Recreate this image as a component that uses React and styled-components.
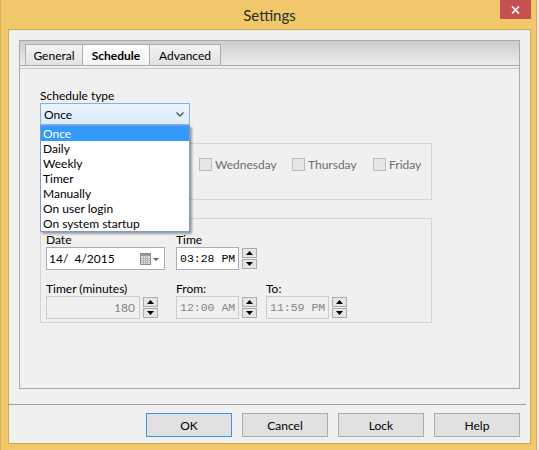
import React from 'react';
import styled, { createGlobalStyle } from 'styled-components';

const GlobalStyle = createGlobalStyle`
  html, body {
    margin: 0;
    padding: 0;
    background: #e9e9e9;
  }
  body {
    font-family: Lato, "Noto Sans", sans-serif;
    font-size: 12px;
    color: #000;
  }
  * {
    box-sizing: border-box;
  }
`;

const Window = styled.div`
  width: 537px;
  height: 450px;
  display: flex;
  flex-direction: column;
  background: #f0c869;
  border-left: 1px solid #d9b257;
  border-right: 1px solid #d9b257;
  padding: 0 5px 6px 7px;
`;

const TitleBar = styled.div`
  height: 29px;
  display: grid;
  grid-template-columns: 1fr auto 1fr;
  align-items: start;
`;

const Title = styled.div`
  grid-column: 2;
  font-size: 15px;
  line-height: 30px;
  color: #2b2b2b;
`;

const CloseButton = styled.div`
  grid-column: 3;
  justify-self: end;
  width: 31px;
  height: 19px;
  background: #c75050;
  display: flex;
  align-items: center;
  justify-content: center;
`;

const Client = styled.div`
  flex: 1;
  display: flex;
  flex-direction: column;
  background: #f0f0f0;
  border: 1px solid #cfa94f;
  padding: 10px 10px 0 10px;
`;

const TabControl = styled.div`
  height: 349px;
  display: flex;
  flex-direction: column;
  border: 1px solid #a9a9a9;
`;

const TabStrip = styled.div`
  height: 25px;
  display: flex;
  align-items: flex-end;
  padding-left: 5px;
  background: linear-gradient(#cdcdcd, #ececec);
  border-bottom: 1px solid #a9a9a9;
`;

const Tab = styled.div`
  width: ${p => p.$w}px;
  height: 21px;
  display: flex;
  align-items: center;
  justify-content: center;
  border: 1px solid #acacac;
  border-bottom: none;
  margin-right: -1px;
  background: ${p => (p.$active ? 'linear-gradient(#ffffff, #f4f4f4)' : 'linear-gradient(#f2f2f2, #e3e3e3)')};
  font-weight: ${p => (p.$active ? 700 : 400)};
  position: relative;
  z-index: ${p => (p.$active ? 1 : 0)};
`;

const Pane = styled.div`
  flex: 1;
  margin-top: 2px;
  border-top: 1px solid #c9c9c9;
  padding: 19px 0 0 20px;
`;

const FieldLabel = styled.div`
  line-height: ${p => p.$lh || 15}px;
  height: ${p => p.$lh || 15}px;
  white-space: nowrap;
`;

const ComboWrap = styled.div`
  position: relative;
  width: 150px;
  z-index: 5;
`;

const Combo = styled.div`
  height: 22px;
  display: flex;
  align-items: center;
  justify-content: space-between;
  padding: 0 5px 0 3px;
  border: 1px solid #7eb4ea;
  background: linear-gradient(#ecf4fc, #dcecfc);
`;

const DropList = styled.ul`
  position: absolute;
  top: 100%;
  left: 0;
  width: 150px;
  margin: 0;
  padding: 0;
  list-style: none;
  background: #fff;
  border: 1px solid #7a9cc8;
  box-shadow: 2px 2px 2px rgba(0, 0, 0, 0.35);
`;

const Option = styled.li`
  height: 15px;
  line-height: 15px;
  padding-left: 2px;
  white-space: nowrap;
  background: ${p => (p.$selected ? '#3399ff' : 'transparent')};
  color: ${p => (p.$selected ? '#fff' : '#000')};
`;

const GroupBox = styled.div`
  width: 392px;
  margin-top: 18px;
  border: 1px solid #d5d5d5;
`;

const DaysGrid = styled.div`
  display: grid;
  grid-template-columns: 76px 78px 93px 81px auto;
  grid-template-rows: 15px 15px;
  row-gap: 8px;
  padding: 13px 0 4px 4px;
`;

const CheckItem = styled.label`
  grid-column: ${p => p.$col};
  display: flex;
  align-items: center;
  gap: 3px;
  height: 15px;
  color: #6d6d6d;
  white-space: nowrap;
`;

const CheckBox = styled.span`
  width: 13px;
  height: 13px;
  border: 1px solid #bcbcbc;
  background: #e6e6e6;
`;

const FieldsGrid = styled.div`
  display: grid;
  grid-template-columns: 130px 90px auto;
  row-gap: 12px;
  padding: 14px 0 3px 5px;
`;

const ControlRow = styled.div`
  display: flex;
  align-items: flex-start;
  gap: 3px;
  height: 23px;
`;

const TextBox = styled.div`
  width: ${p => p.$w}px;
  height: 23px;
  display: flex;
  align-items: center;
  justify-content: ${p => (p.$right ? 'flex-end' : 'flex-start')};
  padding: 0 4px 0 3px;
  border: 1px solid ${p => (p.$disabled ? '#cccccc' : '#abadb3')};
  background: ${p => (p.$disabled ? '#f0f0f0' : '#fff')};
  color: ${p => (p.$disabled ? '#858585' : '#000')};
  font-family: ${p => (p.$mono ? '"Liberation Mono", "DejaVu Sans Mono", monospace' : 'inherit')};
  font-size: ${p => (p.$mono ? '11.5px' : '12px')};
  white-space: pre;
`;

const DateBox = styled(TextBox)`
  padding: 0 4px 0 2px;
  justify-content: space-between;
`;

const Spin = styled.div`
  display: flex;
  flex-direction: column;
  gap: 1px;
  padding-top: 1px;
`;

const SpinButton = styled.div`
  width: 15px;
  height: 10px;
  display: flex;
  align-items: center;
  justify-content: center;
  border: 1px solid #acacac;
  background: #e5e5e5;
`;

const Separator = styled.div`
  height: 1px;
  margin: 15px -6px 0 -10px;
  background: #a0a0a0;
`;

const ButtonRow = styled.div`
  display: flex;
  justify-content: flex-end;
  gap: 10px;
  margin-top: 8px;
`;

const Button = styled.div`
  width: 86px;
  height: 24px;
  display: flex;
  align-items: center;
  justify-content: center;
  background: #e1e1e1;
  border: 1px solid ${p => (p.$default ? '#3c93e4' : '#adadad')};
`;

function Triangle({ up }) {
  return (
    <svg width='7' height='4' viewBox='0 0 7 4'>
      <path d={up ? 'M0 4 L3.5 0 L7 4 Z' : 'M0 0 L3.5 4 L7 0 Z'} fill='#000' />
    </svg>
  );
}

function Spinner() {
  return (
    <Spin>
      <SpinButton><Triangle up /></SpinButton>
      <SpinButton><Triangle /></SpinButton>
    </Spin>
  );
}

function CalendarIcon() {
  return (
    <svg width='20' height='12' viewBox='0 0 20 12'>
      <rect x='0.5' y='0.5' width='10' height='11' fill='#e8e8e8' stroke='#8c8c8c' />
      <rect x='1' y='1' width='9' height='2' fill='#9a9a9a' />
      <path d='M1 5.5 H10 M1 7.5 H10 M1 9.5 H10 M3.5 3 V11 M5.5 3 V11 M7.5 3 V11' stroke='#b4b4b4' strokeWidth='1' />
      <path d='M13 5 L19 5 L16 8 Z' fill='#4d6185' />
    </svg>
  );
}

const options = ['Once', 'Daily', 'Weekly', 'Timer', 'Manually', 'On user login', 'On system startup'];
// the first two columns sit under the open list and are not seen
const days = [['Wednesday', 3], ['Thursday', 4], ['Friday', 5]];

export default function App() {
  return (
    <>
      <GlobalStyle />
      <Window>
        <TitleBar>
          <Title>Settings</Title>
          <CloseButton>
            <svg width='9' height='8' viewBox='0 0 9 8'>
              <path d='M1 0.5 L8 7.5 M8 0.5 L1 7.5' stroke='#fff' strokeWidth='1.7' />
            </svg>
          </CloseButton>
        </TitleBar>
        <Client>
          <TabControl>
            <TabStrip>
              <Tab $w={58}>General</Tab>
              <Tab $w={68} $active>Schedule</Tab>
              <Tab $w={72}>Advanced</Tab>
            </TabStrip>
            <Pane>
              <FieldLabel>Schedule type</FieldLabel>
              <ComboWrap>
                <Combo>
                  <span>Once</span>
                  <svg width='8' height='5' viewBox='0 0 8 5'>
                    <path d='M0.5 0.5 L4 4 L7.5 0.5' fill='none' stroke='#555' strokeWidth='1.4' />
                  </svg>
                </Combo>
                <DropList>
                  {options.map((o, i) => (
                    <Option key={o} $selected={i === 0}>{o}</Option>
                  ))}
                </DropList>
              </ComboWrap>
              <GroupBox>
                <DaysGrid>
                  {days.map(([d, col]) => (
                    <CheckItem key={d} $col={col}>
                      <CheckBox />
                      {d}
                    </CheckItem>
                  ))}
                </DaysGrid>
              </GroupBox>
              <GroupBox>
                <FieldsGrid>
                  <div>
                    <FieldLabel $lh={14}>Date</FieldLabel>
                    <ControlRow>
                      <DateBox $w={119}>
                        <span>14/  4/2015</span>
                        <CalendarIcon />
                      </DateBox>
                    </ControlRow>
                  </div>
                  <div>
                    <FieldLabel $lh={14}>Time</FieldLabel>
                    <ControlRow>
                      <TextBox $w={63} $mono>03:28 PM</TextBox>
                      <Spinner />
                    </ControlRow>
                  </div>
                  <div />
                  <div>
                    <FieldLabel $lh={14}>Timer (minutes)</FieldLabel>
                    <ControlRow>
                      <TextBox $w={94} $disabled $right>180</TextBox>
                      <Spinner />
                    </ControlRow>
                  </div>
                  <div>
                    <FieldLabel $lh={14}>From:</FieldLabel>
                    <ControlRow>
                      <TextBox $w={63} $mono $disabled>12:00 AM</TextBox>
                      <Spinner />
                    </ControlRow>
                  </div>
                  <div>
                    <FieldLabel $lh={14}>To:</FieldLabel>
                    <ControlRow>
                      <TextBox $w={63} $mono $disabled>11:59 PM</TextBox>
                      <Spinner />
                    </ControlRow>
                  </div>
                </FieldsGrid>
              </GroupBox>
            </Pane>
          </TabControl>
          <Separator />
          <ButtonRow>
            <Button $default>OK</Button>
            <Button>Cancel</Button>
            <Button>Lock</Button>
            <Button>Help</Button>
          </ButtonRow>
        </Client>
      </Window>
    </>
  );
}
